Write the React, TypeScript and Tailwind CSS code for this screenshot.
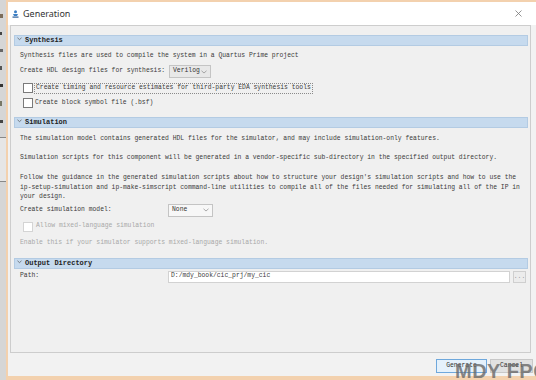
import React from 'react';

const mono = { fontFamily: '"Liberation Mono", "DejaVu Sans Mono", monospace' };

const SectionBar: React.FC<{ title: string; className?: string }> = ({ title, className = '' }) => (
  <div className={`h-[11px] flex items-center bg-[#c6daee] border border-[#b3cbe3] pl-[2px] ${className}`}>
    <svg width="5" height="4" viewBox="0 0 5 4" className="self-start mt-[1px]">
      <path d="M0.5 0.8 L2.5 2.6 L4.5 0.8" fill="none" stroke="#555" strokeWidth="0.7" />
    </svg>
    <span className="ml-[3px] text-[7px] font-bold text-[#1e1e1e] leading-none">{title}</span>
  </div>
);

const Checkbox: React.FC<{ disabled?: boolean }> = ({ disabled }) => (
  <div
    className={`w-[10px] h-[10px] shrink-0 border bg-white ${disabled ? 'border-[#d4d4d4]' : 'border-[#7a7a7a]'}`}
  />
);

const Dropdown: React.FC<{ value: string; width: string; tone: string }> = ({ value, width, tone }) => (
  <div className={`h-[13px] ${width} ${tone} border border-[#c4c4c4] flex items-center justify-between px-[3px]`}>
    <span className="text-[6.4px] text-[#333] leading-none">{value}</span>
    <svg width="6" height="4" viewBox="0 0 6 4">
      <path d="M0.5 0.8 L3 3 L5.5 0.8" fill="none" stroke="#888" strokeWidth="0.7" />
    </svg>
  </div>
);

export default function App() {
  return (
    <div className="w-[536px] h-[380px] flex overflow-hidden relative bg-[#f0f0f0]" style={mono}>
      {/* background window peeking through on the left */}
      <div className="w-[6px] shrink-0 bg-[#d6d6d6] flex flex-col items-start gap-[14px] pt-[14px]">
        <div className="w-[3px] h-[4px] bg-[#7b6c5a]" />
        <div className="w-[2px] h-[3px] bg-[#444]" />
        <div className="w-[3px] h-[3px] bg-[#666]" />
        <div className="w-[2px] h-[4px] bg-[#555]" />
        <div className="w-[3px] h-[3px] bg-[#333]" />
        <div className="w-[2px] h-[5px] bg-[#776]" />
        <div className="w-[3px] h-[3px] bg-[#444]" />
        <div className="w-[6px] h-[45px] bg-[#e6e6e6] border-y border-[#888]" />
      </div>

      {/* dialog */}
      <div className="flex-1 flex flex-col border-l-2 border-t-2 border-b-4 border-[#f3d1ae] bg-[#f2f2f2]">
        {/* title bar */}
        <div className="h-[23px] shrink-0 bg-white flex items-center pl-[4px] pr-[14px]">
          <svg width="7" height="8" viewBox="0 0 7 8">
            <circle cx="3.5" cy="1.8" r="1.5" fill="#3b7fc4" />
            <path d="M1 4 L6 4 L5 6 L2 6 Z" fill="#3b7fc4" />
            <rect x="0.5" y="6.5" width="6" height="1.2" fill="#2c5f99" />
          </svg>
          <span
            className="ml-[4px] text-[9px] text-[#333]"
            style={{ fontFamily: '"Noto Sans", "Open Sans", sans-serif' }}
          >
            Generation
          </span>
          <svg width="7" height="7" viewBox="0 0 7 7" className="ml-auto">
            <path d="M0.5 0.5 L6.5 6.5 M6.5 0.5 L0.5 6.5" stroke="#777" strokeWidth="0.8" />
          </svg>
        </div>

        {/* main panel */}
        <div className="h-[328px] ml-[2px] mr-[5px] border border-[#cdcdcd] bg-[#f0f0f0] pl-[3px] pr-[2px] pt-[9px] text-[6.36px] text-[#3a3a3a] leading-none">
          <SectionBar title="Synthesis" />
          <div className="pl-[6px]">
            <div className="mt-[5px] h-[10px] flex items-center">
              Synthesis files are used to compile the system in a Quartus Prime project
            </div>
            <div className="mt-[4px] h-[13px] flex items-center">
              <span className="w-[149px] shrink-0">Create HDL design files for synthesis:</span>
              <Dropdown value="Verilog" width="w-[42px]" tone="bg-[#e8e8e8]" />
            </div>
          </div>
          <div className="pl-[9px]">
            <div className="mt-[5px] h-[10px] flex items-center">
              <Checkbox />
              <span className="ml-[1px] h-[11px] px-[1px] flex items-center border border-dotted border-[#8a8a8a]">
                Create timing and resource estimates for third-party EDA synthesis tools
              </span>
            </div>
            <div className="mt-[5px] h-[10px] flex items-center">
              <Checkbox />
              <span className="ml-[2px]">Create block symbol file (.bsf)</span>
            </div>
          </div>

          <SectionBar title="Simulation" className="mt-[9px]" />
          <div className="pl-[6px]">
            <div className="mt-[6px] h-[10px] flex items-center">
              The simulation model contains generated HDL files for the simulator, and may include simulation-only features.
            </div>
            <div className="mt-[9px] h-[10px] flex items-center">
              Simulation scripts for this component will be generated in a vendor-specific sub-directory in the specified output directory.
            </div>
            <div className="mt-[10px] leading-[9.5px] whitespace-pre">
              {"Follow the guidance in the generated simulation scripts about how to structure your design's simulation scripts and how to use the\nip-setup-simulation and ip-make-simscript command-line utilities to compile all of the files needed for simulating all of the IP in\nyour design."}
            </div>
            <div className="mt-[2px] h-[13px] flex items-center">
              <span className="w-[148px] shrink-0">Create simulation model:</span>
              <Dropdown value="None" width="w-[45px]" tone="bg-[#f7f7f7]" />
            </div>
          </div>
          <div className="pl-[9px]">
            <div className="mt-[5px] h-[10px] flex items-center text-[#a8a8a8]">
              <Checkbox disabled />
              <span className="ml-[3px]">Allow mixed-language simulation</span>
            </div>
          </div>
          <div className="pl-[6px]">
            <div className="mt-[7px] h-[10px] flex items-center text-[#a8a8a8]">
              Enable this if your simulator supports mixed-language simulation.
            </div>
          </div>

          <SectionBar title="Output Directory" className="mt-[9px]" />
          <div className="pl-[6px] pr-[2px]">
            <div className="mt-[2px] h-[12px] flex items-center">
              <span className="w-[148px] shrink-0">Path:</span>
              <div className="h-[12px] flex-1 bg-white border border-[#d2d2d2] flex items-center px-[2px]">
                D:/mdy_book/cic_prj/my_cic
              </div>
              <div className="ml-[3px] w-[13px] h-[12px] border border-[#cfcfcf] bg-[#ececec] flex items-end justify-center pb-[1px] text-[#999]">
                ...
              </div>
            </div>
          </div>
        </div>

        {/* footer */}
        <div className="flex-1 flex items-center justify-end gap-[3px] pr-[3px] pt-[2px]">
          <div className="w-[51px] h-[14px] bg-[#e5f1fb] border border-[#6fa8dc] flex items-center justify-center text-[6.36px] text-[#333]">
            Generate
          </div>
          <div className="w-[43px] h-[14px] bg-[#e1e1e1] border border-[#c8c8c8] flex items-center justify-center text-[6.36px] text-[#333]">
            Cancel
          </div>
        </div>
      </div>

      {/* watermark */}
      <div
        className="absolute left-[455px] top-[361px] text-[20px] font-bold text-[#6a6a6a] opacity-80 leading-none whitespace-nowrap tracking-[0.5px]"
        style={{ fontFamily: '"Liberation Sans Narrow", "Liberation Sans", sans-serif' }}
      >
        MDY FPGA
      </div>
    </div>
  );
}
